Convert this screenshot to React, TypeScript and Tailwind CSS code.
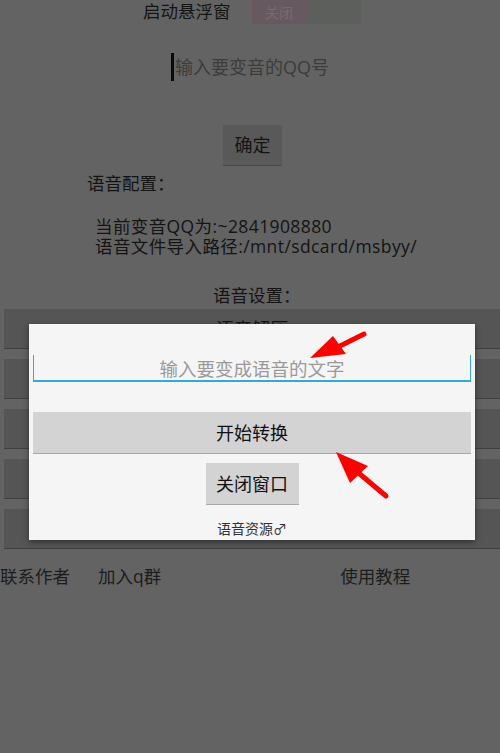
const font = { fontFamily: '"Open Sans", "Noto Sans CJK SC", sans-serif' }

function Arrow({ d, head }: { d: string; head: string }) {
  return (
    <>
      <path d={d} stroke="#ff0000" strokeWidth={5} strokeLinecap="round" fill="none" />
      <polygon points={head} fill="#ff0000" />
    </>
  )
}

export default function App() {
  const rows = ['语音解压', '', '', '', '']

  return (
    <div className="relative w-[500px] h-[753px] overflow-hidden bg-[#636363] text-[#141414]" style={font}>
      {/* dimmed activity underneath */}
      <div className="flex h-[24px] items-center pl-[143px]">
        <span className="text-[17.5px] leading-none">启动悬浮窗</span>
        <div className="ml-[21px] flex h-full self-start">
          <div className="flex w-[55px] items-center justify-center bg-[#675960] text-[14px] text-[#79696f]">关闭</div>
          <div className="w-[54px] bg-[#5c5f5c]" />
        </div>
      </div>

      <div className="mt-[29px] flex h-[28px] items-center pl-[171px]">
        <div className="h-[28px] w-[3px] bg-[#0a0a0a]" />
        <span className="ml-[1px] text-[18px] leading-none text-[#3c3c3c]">输入要变音的QQ号</span>
      </div>

      <div className="ml-[223px] mt-[44px] flex h-[41px] w-[59px] items-center justify-center border-b border-[#4a4a4a] bg-[#595959] text-[18px] leading-none">
        确定
      </div>

      <div className="mt-[6px] pl-[87px] text-[17.5px] leading-[22px]">语音配置：</div>

      <div className="mt-[22px] flex flex-col pl-[95px] text-[17.5px] leading-[20px] tracking-[0.4px]">
        <span>当前变音QQ为:~2841908880</span>
        <span>语音文件导入路径:/mnt/sdcard/msbyy/</span>
      </div>

      <div className="mt-[29px] pl-[213px] text-[17.5px] leading-[20px]">语音设置：</div>

      <div className="mt-[4px] flex flex-col gap-[10px] pl-[4px]">
        {rows.map((label, i) => (
          <div
            key={i}
            className="flex h-[40px] items-center justify-center border-b border-[#3f3f3f] bg-[#555555] text-[18px] leading-none"
          >
            {label}
          </div>
        ))}
      </div>

      <div className="mt-[16px] flex text-[17.5px] leading-[22px] text-[#1c1c1c]">
        <span>联系作者</span>
        <span className="ml-[28px]">加入q群</span>
        <span className="ml-[179px]">使用教程</span>
      </div>

      {/* dialog */}
      <div className="absolute left-[29px] top-[324px] flex h-[216px] w-[446px] flex-col bg-[#f5f5f5] px-[4px] shadow-[0_2px_6px_rgba(0,0,0,0.45)]">
        <div className="mt-[31px] flex h-[27px] items-end justify-center border-x border-b-2 border-x-[#33a9d4] border-b-[#33a9d4] pb-[3px] text-[18.5px] leading-none text-[#9a9a9a]">
          <span className="-mb-[1px]">输入要变成语音的文字</span>
        </div>
        <div className="mt-[30px] flex h-[42px] items-center justify-center border-b border-[#a8a8a8] bg-[#d3d3d3] text-[18px] leading-none text-[#111]">
          开始转换
        </div>
        <div className="mt-[9px] flex h-[42px] w-[93px] items-center justify-center self-center border-b border-[#a8a8a8] bg-[#d3d3d3] text-[18px] leading-none text-[#111]">
          关闭窗口
        </div>
        <div className="mt-[15px] text-center text-[14px] leading-[18px] text-[#333]">语音资源♂</div>
      </div>

      {/* red annotation arrows */}
      <svg className="absolute left-0 top-0" width="500" height="753" viewBox="0 0 500 753">
        <Arrow d="M364 334 L336 348" head="310,358 333,336 346,354" />
        <Arrow d="M386 496 L355 470" head="336,452 368,466 350,483" />
      </svg>
    </div>
  )
}
